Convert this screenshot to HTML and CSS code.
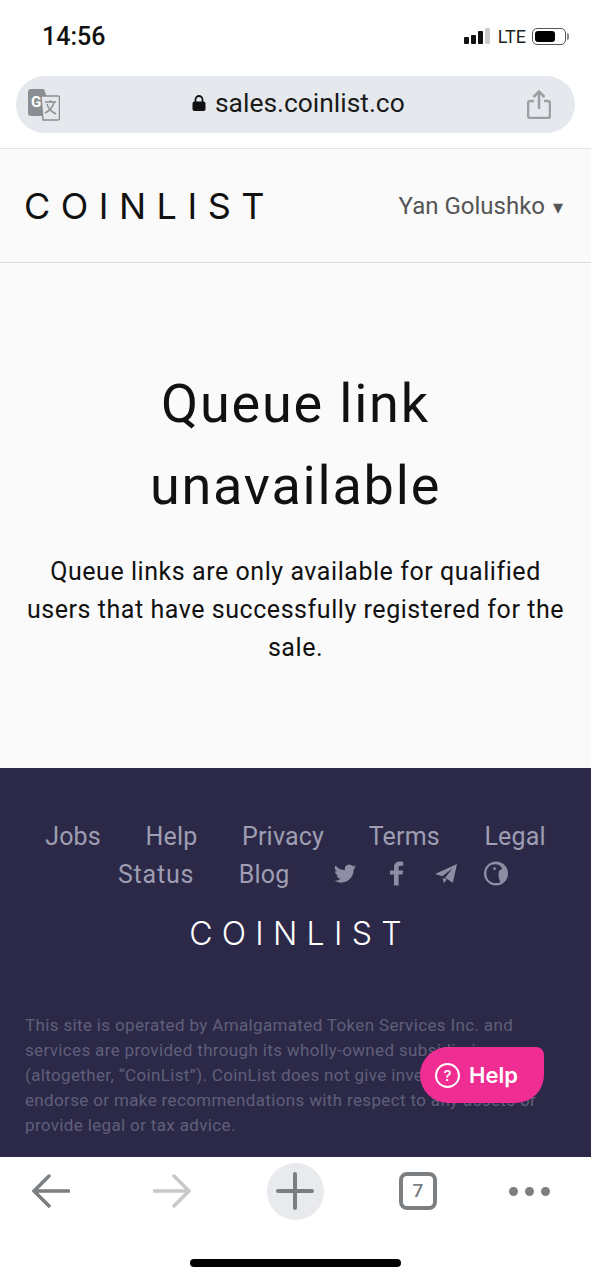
FILE: index.html
```html
<!DOCTYPE html>
<html lang="en">
  <head>
    <meta charset="UTF-8">
    <meta name="viewport" content="width=device-width, initial-scale=1.0">
    <title>Queue link unavailable | CoinList</title>
    <link rel="stylesheet" href="styles.css">
  </head>
  <body>
    <!-- Browser top -->
    <div class="browser-top">
      <div class="status-bar">
        <span class="clock">14:56</span>
        <div class="status-right">
          <div class="signal">
            <i class="bar-1"></i><i class="bar-2"></i><i class="bar-3"></i><i class="bar-4"></i>
          </div>
          <span class="network">LTE</span>
          <div class="battery"><i></i></div>
        </div>
      </div>
      <div class="url-bar">
        <svg class="translate-icon" viewBox="0 0 32 32">
          <path d="M3 0h13l10 27H3a3 3 0 0 1-3-3V3a3 3 0 0 1 3-3z" fill="#8b8f93"/>
          <path d="M13 7h17a1.500 1.500 0 0 1 1.500 1.500v21a1.500 1.500 0 0 1-1.500 1.500H15z" fill="#e5e8ec" stroke="#8b8f93" stroke-width="1.500"/>
          <text x="3" y="18" class="translate-g">G</text>
          <path d="M17 13h11M22.500 11v2M26 13c-1 5-5 9-9 11M19 15c1 4 5 8 9 10" fill="none" stroke="#8b8f93" stroke-width="1.400"/>
        </svg>
        <div class="address">
          <svg class="lock" viewBox="0 0 14 16">
            <path d="M3.500 7V4.500a3.500 3.500 0 0 1 7 0V7" fill="none" stroke="#111" stroke-width="1.800"/>
            <rect x="0.500" y="6.500" width="13" height="9.500" rx="2" fill="#111"/>
          </svg>
          <span>sales.coinlist.co</span>
        </div>
        <svg class="share-icon" viewBox="0 0 24 29">
          <path d="M7 11H3.500A2.500 2.500 0 0 0 1 13.500v12A2.500 2.500 0 0 0 3.500 28h17a2.500 2.500 0 0 0 2.500-2.500v-12a2.500 2.500 0 0 0-2.500-2.500H17" fill="none" stroke="#9b9fa3" stroke-width="2.500"/>
          <path d="M12 19V2M6.500 7L12 1.500 17.500 7" fill="none" stroke="#9b9fa3" stroke-width="2.500"/>
        </svg>
      </div>
    </div>

    <!-- Web page -->
    <div class="page">
      <header class="site-header">
        <span class="logo">COINLIST</span>
        <div class="user-menu">Yan Golushko <span class="caret">▾</span></div>
      </header>

      <main class="notice">
        <h1>Queue link<br>unavailable</h1>
        <p>Queue links are only available for qualified<br>users that have successfully registered for the<br>sale.</p>
      </main>

      <footer class="site-footer">
        <nav class="footer-links">
          <a>Jobs</a>
          <a>Help</a>
          <a>Privacy</a>
          <a>Terms</a>
          <a>Legal</a>
          <a class="status-link">Status</a>
          <a>Blog</a>
          <svg class="social twitter" viewBox="0 0 24 24">
            <path d="M24 4.600a9.800 9.800 0 0 1-2.800.8 4.900 4.900 0 0 0 2.200-2.700 9.800 9.800 0 0 1-3.100 1.200 4.900 4.900 0 0 0-8.400 4.500A14 14 0 0 1 1.700 3.200a4.900 4.900 0 0 0 1.500 6.600 4.900 4.900 0 0 1-2.200-.6c0 2.400 1.700 4.500 3.900 5a4.900 4.900 0 0 1-2.200.1 4.900 4.900 0 0 0 4.600 3.400A9.900 9.900 0 0 1 0 19.700 14 14 0 0 0 7.500 22c9.100 0 14.300-7.700 14-14.600A10 10 0 0 0 24 4.600z"/>
          </svg>
          <svg class="social facebook" viewBox="0 0 14 24">
            <path d="M4 24V13H0V9h4V6c0-4 2.400-6 5.800-6 1.600 0 3 .1 3.400.2v4h-2.400C9 4.200 8.600 5 8.600 6.400V9h4.500l-.6 4H8.600v11z"/>
          </svg>
          <svg class="social telegram" viewBox="0 0 24 24">
            <path d="M24 1.500L19.500 22 11 16.500 19 6.500 8 15 0 12.500z"/>
            <path d="M8.500 16.500l1 6 3.500-4z"/>
          </svg>
          <svg class="social gecko" viewBox="0 0 26 26">
            <circle cx="13" cy="13" r="12.500"/>
            <path d="M3 13C3 7 7 3.500 12 3.500c3.500 0 6 1.500 7.500 4.500l-3.500 2.500c-1 4 0 8 1.500 11.500-1.500.7-3 1-4.500 1C7 23 3 19 3 13z" fill="#2b2947"/>
            <circle cx="11.500" cy="8" r="1.400"/>
          </svg>
        </nav>
        <div class="footer-logo"><span class="logo">COINLIST</span></div>
        <p class="legal">This site is operated by Amalgamated Token Services Inc. and<br>services are provided through its wholly-owned subsidiaries<br>(altogether, “CoinList”). CoinList does not give investment,<br>endorse or make recommendations with respect to any assets or<br>provide legal or tax advice.</p>
      </footer>
    </div>

    <!-- Browser bottom -->
    <div class="browser-bottom">
      <div class="toolbar">
        <svg class="tool-arrow" viewBox="0 0 38 34">
          <path d="M37 17H3M17 2L2 17l15 15" fill="none" stroke="#7b7f82" stroke-width="3.500" stroke-linecap="round"/>
        </svg>
        <svg class="tool-arrow" viewBox="0 0 38 34">
          <path d="M1 17h34M21 2l15 15-15 15" fill="none" stroke="#c6c8ca" stroke-width="3.500" stroke-linecap="round"/>
        </svg>
        <div class="new-tab">
          <svg viewBox="0 0 38 38">
            <path d="M19 2v34M2 19h34" fill="none" stroke="#7b7f82" stroke-width="4" stroke-linecap="round"/>
          </svg>
        </div>
        <div class="tabs-count">7</div>
        <div class="more-dots"><i></i><i></i><i></i></div>
      </div>
      <div class="home-indicator"></div>
    </div>

    <!-- Floating help -->
    <button class="help-button">
      <span class="help-mark">?</span>
      Help
    </button>
  </body>
</html>
```

FILE: styles.css
```css
/* Reset */
* {
  margin: 0;
  padding: 0;
  box-sizing: border-box;
}

body {
  position: relative;
  display: flex;
  flex-direction: column;
  width: 591px;
  height: 1280px;
  overflow: hidden;
  background-color: #ffffff;
  font-family: 'Roboto', sans-serif;
}

/* Browser top */
.browser-top {
  height: 149px;
  padding: 0 16px;
  background-color: #ffffff;
  border-bottom: 1px solid #e2e2e2;
}

.status-bar {
  display: flex;
  justify-content: space-between;
  align-items: center;
  height: 76px;
  padding: 0 9px 4px 26px;
}

.clock {
  font-size: 25px;
  font-weight: 500;
  color: #111;
}

.status-right {
  display: flex;
  align-items: center;
}

.signal {
  display: flex;
  align-items: flex-end;
  gap: 2px;
  height: 16px;
  margin-right: 8px;
}

.signal i {
  display: block;
  width: 5px;
  border-radius: 1px;
  background-color: #111;
}

.signal .bar-1 { height: 7px; }
.signal .bar-2 { height: 9px; }
.signal .bar-3 { height: 13px; }
.signal .bar-4 { height: 16px; background-color: #ccc; }

.network {
  font-size: 18px;
  color: #222;
  margin-right: 6px;
}

.battery {
  position: relative;
  width: 34px;
  height: 17px;
  padding: 2px;
  border: 1px solid #555;
  border-radius: 5px;
}

.battery i {
  display: block;
  width: 20px;
  height: 11px;
  border-radius: 3px;
  background-color: #000;
}

.battery::after {
  content: "";
  position: absolute;
  top: 4px;
  right: -4px;
  width: 2px;
  height: 7px;
  border-radius: 0 2px 2px 0;
  background-color: #888;
}

.url-bar {
  position: relative;
  display: flex;
  align-items: center;
  justify-content: space-between;
  height: 57px;
  padding: 0 24px 0 12px;
  border-radius: 29px;
  background-color: #e5e8ec;
}

.translate-icon {
  width: 32px;
  height: 32px;
}

.translate-g {
  font-family: 'Roboto', sans-serif;
  font-size: 15px;
  font-weight: 700;
  fill: #ffffff;
}

.address {
  position: absolute;
  left: 176px;
  top: 12px;
  display: flex;
  align-items: center;
  gap: 9px;
  font-size: 26.400px;
  color: #1a1a1a;
}

.lock {
  width: 14px;
  height: 16px;
}

.share-icon {
  width: 24px;
  height: 29px;
}

/* Web page */
.page {
  flex: 1;
  min-height: 0;
  overflow: hidden;
  background-color: #fafafa;
}

.site-header {
  display: flex;
  justify-content: space-between;
  align-items: center;
  height: 114px;
  padding: 0 28px 0 24px;
  border-bottom: 1px solid #dcdcdc;
}

.logo {
  font-family: 'Inter', sans-serif;
  font-size: 36px;
  font-weight: 400;
  letter-spacing: 10.500px;
  line-height: 1;
  color: #111;
}

.user-menu {
  font-size: 24px;
  color: #555;
}

.caret {
  margin-left: 2px;
  font-family: 'DejaVu Sans', sans-serif;
  font-size: 20px;
}

.notice {
  height: 505px;
  padding-top: 100px;
  text-align: center;
}

.notice h1 {
  font-size: 54px;
  font-weight: 400;
  line-height: 82px;
  letter-spacing: 1.800px;
  color: #111;
}

.notice p {
  margin-top: 26px;
  font-size: 25px;
  line-height: 38px;
  letter-spacing: 0.550px;
  color: #111;
}

/* Footer */
.site-footer {
  min-height: 400px;
  padding: 50px 25px 0;
  background-color: #2b2947;
}

.footer-links {
  display: flex;
  flex-wrap: wrap;
  justify-content: center;
  align-items: center;
  column-gap: 44.500px;
  font-size: 25px;
  line-height: 38px;
  letter-spacing: 0.200px;
  color: #9e9db2;
}

.status-link {
  margin-left: 35.500px;
  letter-spacing: 0.800px;
}

.social {
  fill: #8e8da3;
  height: 25px;
  margin-bottom: 4px;
}

.twitter { width: 22px; }
.facebook { width: 14px; margin-left: -11px; margin-right: -11px; }
.telegram { width: 22px; margin-left: -2px; }
.gecko { width: 26px; margin-left: -19px; }

.footer-logo {
  margin-top: 24px;
  padding-left: 9px;
  text-align: center;
}

.footer-logo .logo {
  font-size: 32px;
  font-weight: 300;
  letter-spacing: 9.300px;
  color: #ffffff;
}

.legal {
  margin-top: 63px;
  font-size: 17px;
  line-height: 25px;
  letter-spacing: 0.350px;
  white-space: nowrap;
  color: #605f7b;
}

/* Browser bottom */
.browser-bottom {
  height: 123px;
  background-color: #ffffff;
}

.toolbar {
  display: grid;
  grid-template-columns: 102px 140px 106px 140px 82px;
  justify-items: center;
  align-items: center;
  height: 68px;
}

.tool-arrow {
  width: 38px;
  height: 34px;
}

.new-tab {
  display: flex;
  justify-content: center;
  align-items: center;
  width: 57px;
  height: 57px;
  border-radius: 50%;
  background-color: #e8eaed;
}

.new-tab svg {
  width: 38px;
  height: 38px;
}

.tabs-count {
  width: 38px;
  height: 38px;
  border: 4px solid #7b7f82;
  border-radius: 8px;
  text-align: center;
  font-size: 19px;
  font-weight: 500;
  line-height: 30px;
  color: #7b7f82;
}

.more-dots {
  display: flex;
  gap: 7px;
}

.more-dots i {
  display: block;
  width: 9px;
  height: 9px;
  border-radius: 50%;
  background-color: #7b7f82;
}

.home-indicator {
  width: 211px;
  height: 8px;
  margin: 34px 0 0 190px;
  border-radius: 4px;
  background-color: #000;
}

/* Floating help */
.help-button {
  position: absolute;
  top: 1047px;
  left: 420px;
  display: flex;
  align-items: center;
  gap: 9px;
  width: 124px;
  height: 56px;
  padding-left: 15px;
  border: none;
  border-radius: 28px 8px 28px 28px;
  background-color: #f02d92;
  font-family: 'Inter', sans-serif;
  font-size: 22px;
  font-weight: 600;
  color: #ffffff;
}

.help-mark {
  width: 25px;
  height: 25px;
  border: 2px solid #ffffff;
  border-radius: 50%;
  font-size: 15px;
  font-weight: 500;
  line-height: 21px;
  text-align: center;
}
```
